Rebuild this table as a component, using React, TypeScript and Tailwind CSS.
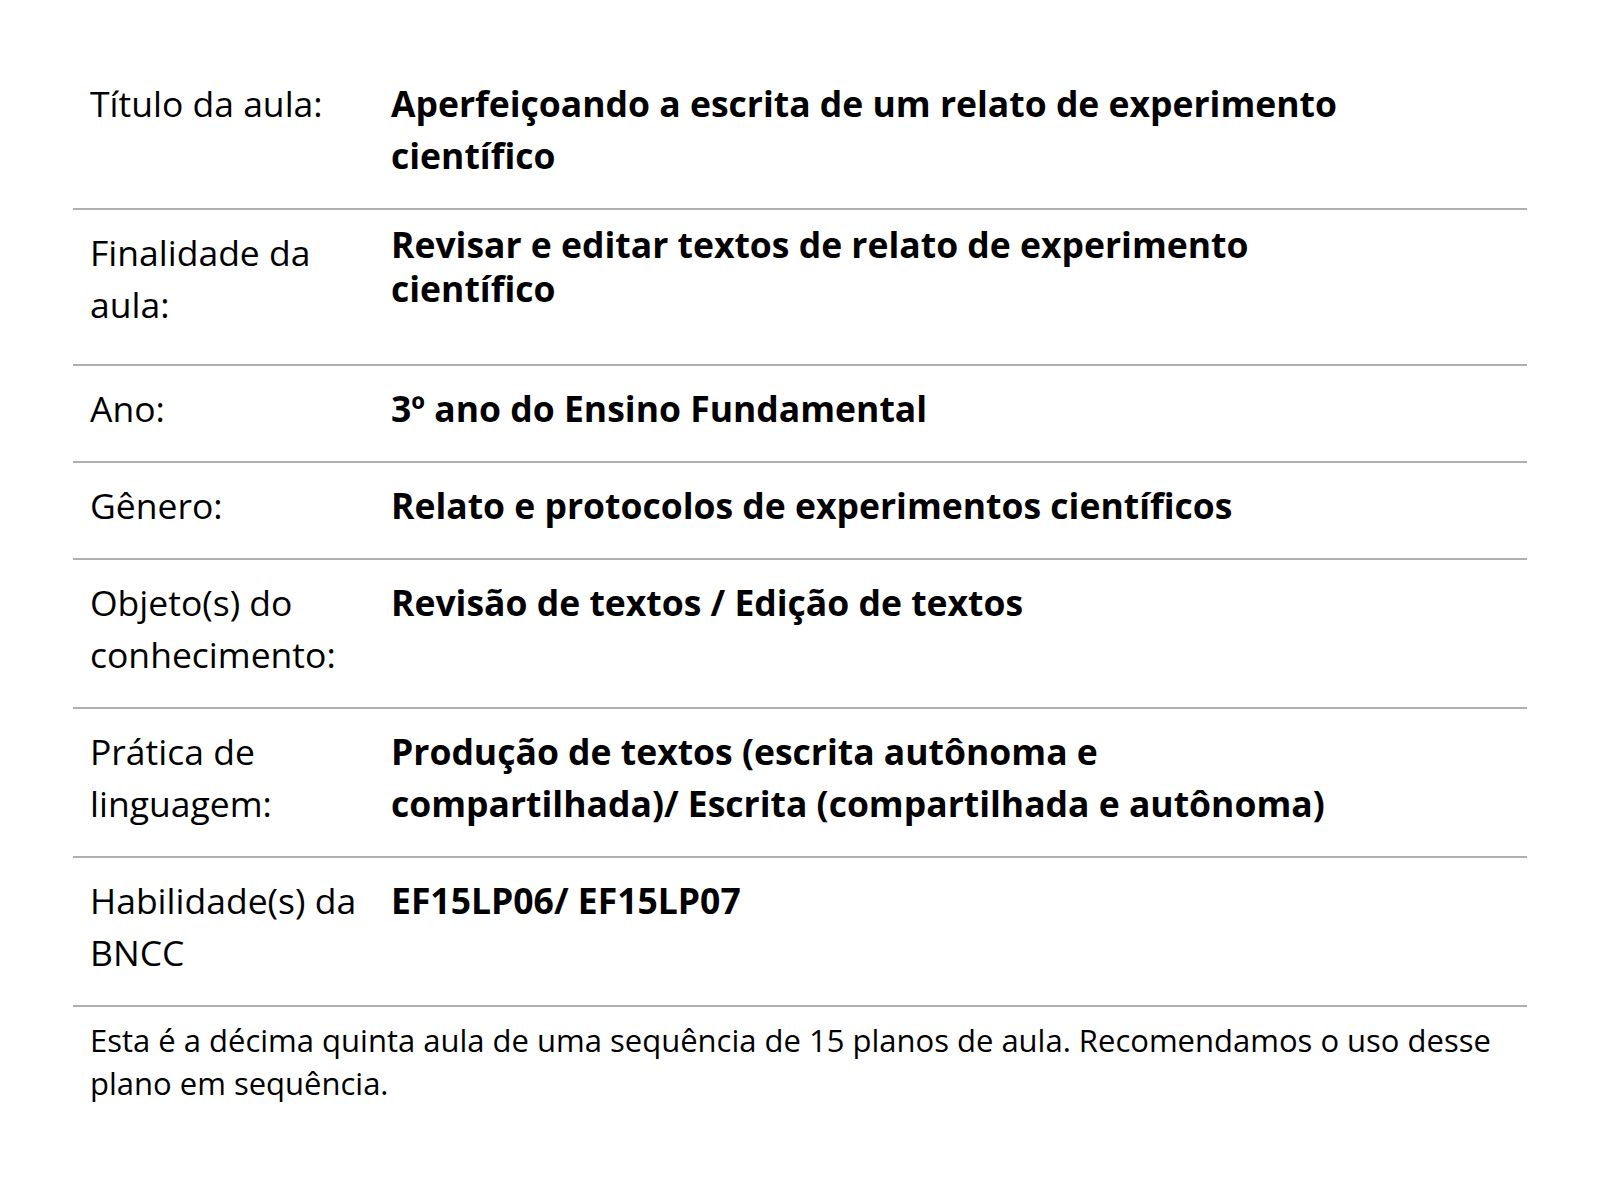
import React from 'react';

interface Row {
  label: string;
  value: string;
  tight?: boolean;
}

const rows: Row[] = [
  { label: 'Título da aula:', value: 'Aperfeiçoando a escrita de um relato de experimento científico' },
  { label: 'Finalidade da aula:', value: 'Revisar e editar textos de relato de experimento científico', tight: true },
  { label: 'Ano:', value: '3º ano do Ensino Fundamental' },
  { label: 'Gênero:', value: 'Relato e protocolos de experimentos científicos' },
  { label: 'Objeto(s) do conhecimento:', value: 'Revisão de textos / Edição de textos' },
  { label: 'Prática de linguagem:', value: 'Produção de textos (escrita autônoma e compartilhada)/ Escrita (compartilhada e autônoma)' },
  { label: 'Habilidade(s) da BNCC', value: 'EF15LP06/ EF15LP07' },
];

const App: React.FC = () => {
  return (
    <div className="min-h-[1200px] w-[1600px] bg-white text-black font-['Open_Sans',sans-serif]">
      <div className="ml-[73px] w-[1454px] pt-[61px]">
        {rows.map((row, i) => (
          <div key={i} className="flex pt-[15.5px] pb-[27.5px] border-b-2 border-[#b0b0b0]">
            <div className="w-[318px] shrink-0 pl-[17px] pr-4 text-[35.5px] leading-[52px]">{row.label}</div>
            {row.tight ? (
              <div className="w-[970px] -mt-[4px] mb-[27px] text-[35.5px] font-bold leading-[44px]">{row.value}</div>
            ) : (
              <div className="w-[970px] text-[35.5px] font-bold leading-[52px]">{row.value}</div>
            )}
          </div>
        ))}
        <p className="pl-[17px] pr-4 pt-[12px] text-[31px] leading-[43px]">
          Esta é a décima quinta aula de uma sequência de 15 planos de aula. Recomendamos o uso desse plano em
          sequência.
        </p>
      </div>
    </div>
  );
};

export default App;
